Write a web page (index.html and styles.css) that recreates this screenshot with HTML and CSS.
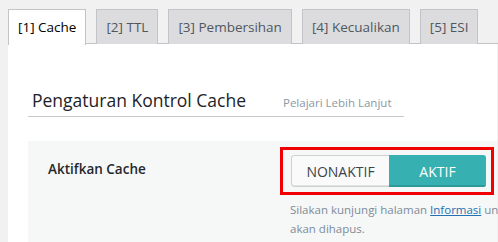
FILE: index.html
```html
<!DOCTYPE html>
<html lang="id">
<head>
    <meta charset="UTF-8">
    <meta name="viewport" content="width=device-width, initial-scale=1.0">
    <title>Pengaturan Cache</title>
    <link rel="stylesheet" href="styles.css">
</head>
<body>
    <div class="wrap">
        <!-- Tab navigation -->
        <div class="tabs">
            <a class="tab active" href="#">[1] Cache</a>
            <a class="tab" href="#">[2] TTL</a>
            <a class="tab" href="#">[3] Pembersihan</a>
            <a class="tab" href="#">[4] Kecualikan</a>
            <a class="tab" href="#">[5] ESI</a>
        </div>

        <div class="panel">
            <h3 class="section-title">
                <span>Pengaturan Kontrol Cache</span>
                <a class="learn-more" href="#">Pelajari Lebih Lanjut</a>
            </h3>

            <div class="setting-row">
                <div class="setting-label">Aktifkan Cache</div>
                <div class="setting-field">
                    <div class="highlight">
                        <div class="switch">
                            <span class="switch-off">NONAKTIF</span>
                            <span class="switch-on">AKTIF</span>
                        </div>
                    </div>
                    <p class="description">
                        Silakan kunjungi halaman <a href="#">Informasi</a> untuk<br>
                        akan dihapus.
                    </p>
                </div>
            </div>
        </div>
    </div>
</body>
</html>
```

FILE: styles.css
```css
* {
    margin: 0;
    padding: 0;
    box-sizing: border-box;
}

html, body {
    overflow: hidden;
}

body {
    width: 498px;
    height: 242px;
    font-family: 'Open Sans', 'Noto Sans', sans-serif;
    background: #f1f1f1;
    color: #1d2327;
}

.wrap {
    padding: 9px 0 0 8px;
}

.tabs {
    display: flex;
    gap: 10px;
    border-bottom: 1px solid #c3c4c7;
    height: 35px;
}

.tab {
    display: block;
    height: 35px;
    padding: 6px 9px 0;
    border: 1px solid #c3c4c7;
    border-bottom: none;
    background: #dcdcde;
    color: #50575e;
    font-size: 13.5px;
    line-height: 22px;
    text-decoration: none;
    white-space: nowrap;
}

.tab.active {
    background: #ffffff;
    color: #000000;
    height: 36px;
    margin-bottom: -1px;
}

.panel {
    background: #ffffff;
    width: 489px;
    min-height: 200px;
    padding: 44px 0 0 20px;
}

.section-title {
    display: flex;
    align-items: baseline;
    width: 376px;
    padding: 0 0 1px 4px;
    border-bottom: 1px solid #c8c8c8;
    font-size: 17.5px;
    font-weight: 400;
    color: #1d2327;
    line-height: 24px;
}

.learn-more {
    margin-left: 37px;
    font-size: 11.5px;
    color: #8a98a6;
    text-decoration: none;
}

.setting-row {
    display: flex;
    margin-top: 24px;
    background: #f6f7f7;
    padding: 6px 0 10px 20px;
}

.setting-label {
    flex-shrink: 0;
    width: 232px;
    padding-top: 13px;
    font-size: 13.5px;
    font-weight: 600;
    color: #23282d;
}

.setting-field {
    white-space: nowrap;
}

.highlight {
    display: inline-block;
    border: 3px solid #f00000;
    padding: 5px 5px 5px 8px;
}

.switch {
    display: flex;
    width: 195px;
    height: 32px;
    border-radius: 3px;
    overflow: hidden;
    font-size: 14px;
}

.switch-off,
.switch-on {
    flex: 1;
    display: flex;
    align-items: center;
    justify-content: center;
}

.switch-off {
    background: #fafafa;
    color: #3c434a;
    border: 1px solid #d0d0d0;
    border-right: none;
    border-radius: 3px 0 0 3px;
    box-shadow: inset 0 -1px 0 #e2e2e2;
}

.switch-on {
    background: #36b0b0;
    color: #ffffff;
    box-shadow: inset 0 -2px 0 #2a9a9a;
}

.description {
    padding: 5px 0 0 10px;
    font-size: 11.5px;
    line-height: 19px;
    color: #7d8c99;
}

.description a {
    color: #2271b1;
}
```
